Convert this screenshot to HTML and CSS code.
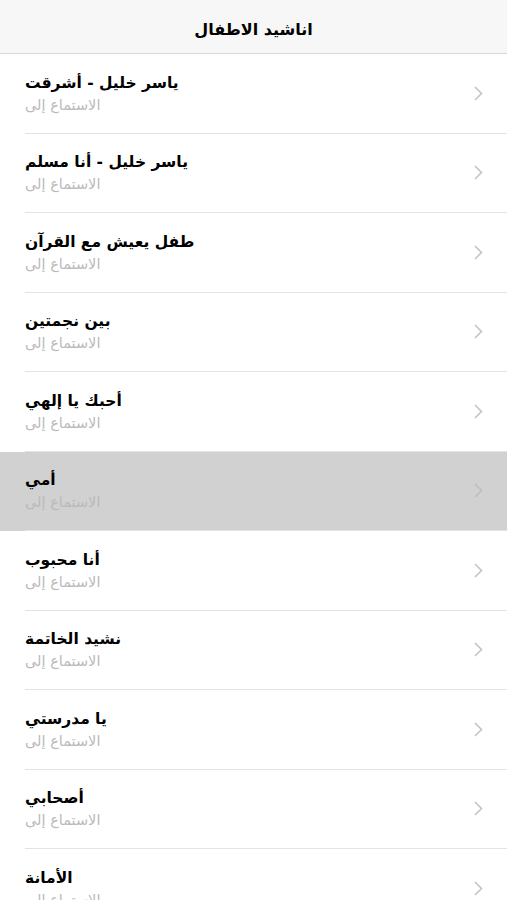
FILE: index.html
```html
<!DOCTYPE html>
<html lang="ar">
<head>
<meta charset="utf-8">
<link rel="stylesheet" href="styles.css">
</head>
<body>
<header class="navbar"><h1 class="nav-title" dir="rtl">اناشيد الاطفال</h1></header>
<ul class="list">
  <li class="row"><div class="row-inner"><div class="text"><div class="title" dir="rtl">ياسر خليل - أشرقت</div><div class="subtitle" dir="rtl">الاستماع إلى</div></div><svg class="chev" viewBox="0 0 9 15"><path d="M1 1l6.5 6.5L1 14"/></svg></div></li>
  <li class="row"><div class="row-inner"><div class="text"><div class="title" dir="rtl">ياسر خليل - أنا مسلم</div><div class="subtitle" dir="rtl">الاستماع إلى</div></div><svg class="chev" viewBox="0 0 9 15"><path d="M1 1l6.5 6.5L1 14"/></svg></div></li>
  <li class="row"><div class="row-inner"><div class="text"><div class="title" dir="rtl">طفل يعيش مع القرآن</div><div class="subtitle" dir="rtl">الاستماع إلى</div></div><svg class="chev" viewBox="0 0 9 15"><path d="M1 1l6.5 6.5L1 14"/></svg></div></li>
  <li class="row"><div class="row-inner"><div class="text"><div class="title" dir="rtl">بين نجمتين</div><div class="subtitle" dir="rtl">الاستماع إلى</div></div><svg class="chev" viewBox="0 0 9 15"><path d="M1 1l6.5 6.5L1 14"/></svg></div></li>
  <li class="row"><div class="row-inner"><div class="text"><div class="title" dir="rtl">أحبك يا إلهي</div><div class="subtitle" dir="rtl">الاستماع إلى</div></div><svg class="chev" viewBox="0 0 9 15"><path d="M1 1l6.5 6.5L1 14"/></svg></div></li>
  <li class="row selected"><div class="row-inner"><div class="text"><div class="title" dir="rtl">أمي</div><div class="subtitle" dir="rtl">الاستماع إلى</div></div><svg class="chev" viewBox="0 0 9 15"><path d="M1 1l6.5 6.5L1 14"/></svg></div></li>
  <li class="row"><div class="row-inner"><div class="text"><div class="title" dir="rtl">أنا محبوب</div><div class="subtitle" dir="rtl">الاستماع إلى</div></div><svg class="chev" viewBox="0 0 9 15"><path d="M1 1l6.5 6.5L1 14"/></svg></div></li>
  <li class="row"><div class="row-inner"><div class="text"><div class="title" dir="rtl">نشيد الخاتمة</div><div class="subtitle" dir="rtl">الاستماع إلى</div></div><svg class="chev" viewBox="0 0 9 15"><path d="M1 1l6.5 6.5L1 14"/></svg></div></li>
  <li class="row"><div class="row-inner"><div class="text"><div class="title" dir="rtl">يا مدرستي</div><div class="subtitle" dir="rtl">الاستماع إلى</div></div><svg class="chev" viewBox="0 0 9 15"><path d="M1 1l6.5 6.5L1 14"/></svg></div></li>
  <li class="row"><div class="row-inner"><div class="text"><div class="title" dir="rtl">أصحابي</div><div class="subtitle" dir="rtl">الاستماع إلى</div></div><svg class="chev" viewBox="0 0 9 15"><path d="M1 1l6.5 6.5L1 14"/></svg></div></li>
  <li class="row"><div class="row-inner"><div class="text"><div class="title" dir="rtl">الأمانة</div><div class="subtitle" dir="rtl">الاستماع إلى</div></div><svg class="chev" viewBox="0 0 9 15"><path d="M1 1l6.5 6.5L1 14"/></svg></div></li>
</ul>
</body>
</html>
```
FILE: styles.css
```css
html, body {
  margin: 0;
  padding: 0;
  background: #ffffff;
  overflow: hidden;
  height: 900px;
}
body {
  font-family: "DejaVu Sans", "Noto Sans", sans-serif;
  color: #000;
}
.navbar {
  height: 53px;
  background: #f7f7f7;
  border-bottom: 1px solid #d9d9d9;
  display: flex;
  align-items: center;
  justify-content: center;
}
.nav-title {
  margin: 0;
  font-size: 16px;
  font-weight: bold;
  padding-top: 6px;
}
.list {
  list-style: none;
  margin: 0;
  padding: 0;
}
.row {
  background: #fff;
}
.row.selected {
  background: #d1d1d1;
}
.row-inner {
  margin-left: 25px;
  height: 78.5px;
  border-bottom: 1px solid #e3e3e3;
  display: flex;
  align-items: center;
  justify-content: space-between;
  padding-right: 24px;
}
.text {
  display: flex;
  flex-direction: column;
  align-items: flex-start;
  padding-top: 1px;
}
.title {
  font-size: 15.5px;
  font-weight: bold;
  line-height: 20px;
  text-align: left;
}
.subtitle {
  font-size: 14.5px;
  line-height: 20px;
  margin-top: 2px;
  color: #bababa;
  text-align: left;
}
.chev {
  width: 9px;
  height: 15px;
  fill: none;
  stroke: #c4c4c8;
  stroke-width: 1.6;
}
.selected .chev { stroke: #bdbdbd; }
```
